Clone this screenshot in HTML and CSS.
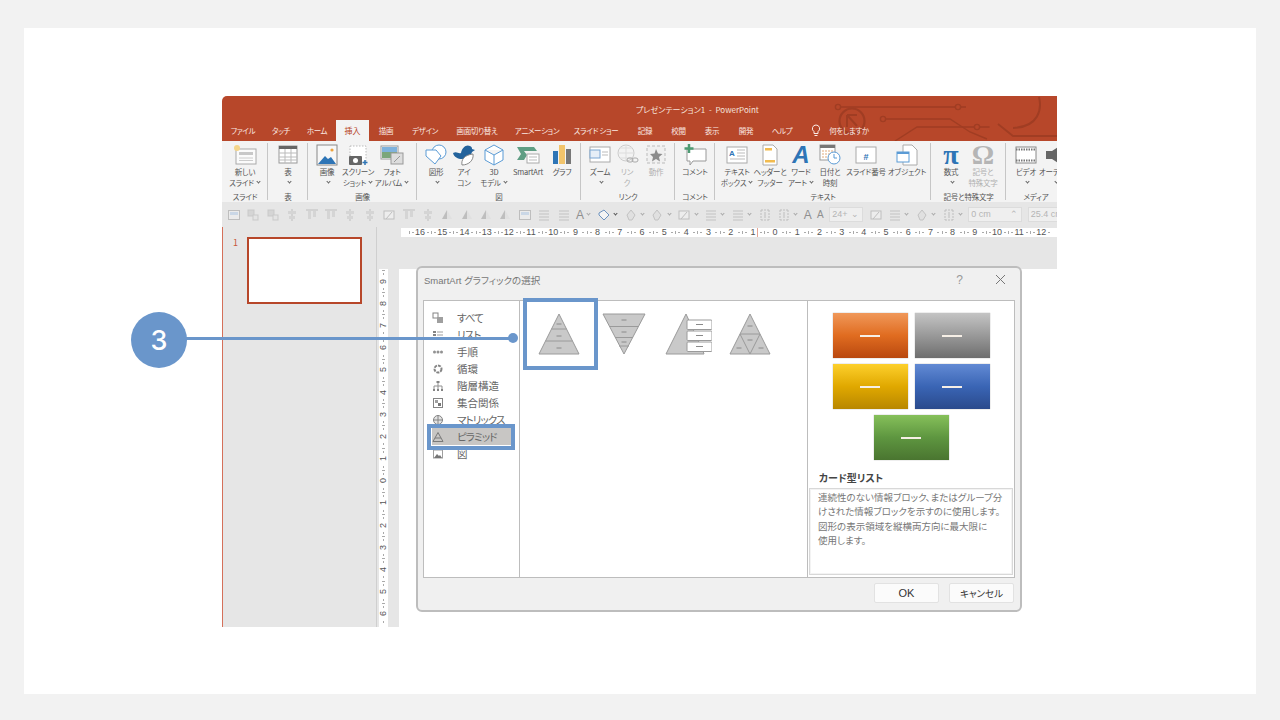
FILE: index.html
```html
<!DOCTYPE html>
<html lang="ja">
<head>
<meta charset="utf-8">
<title>SmartArt グラフィックの選択</title>
<link rel="stylesheet" href="styles.css">
</head>
<body>
<svg class="defs" width="0" height="0">
  <symbol id="t1" viewBox="0 0 14 14"><rect x="1.5" y="2.5" width="11" height="9" fill="#eee" stroke="#aaa"/><rect x="3" y="4" width="8" height="3" fill="#bcd0e6"/></symbol>
  <symbol id="t2" viewBox="0 0 14 14"><rect x="2" y="2" width="6" height="6" fill="#ccc" stroke="#bbb"/><rect x="7" y="7" width="5" height="5" fill="#e4e4e4" stroke="#bbb"/></symbol>
  <symbol id="t3" viewBox="0 0 14 14"><path d="M7 1v12" stroke="#aaa"/><rect x="3" y="3" width="8" height="3" fill="#ccc"/><rect x="4" y="8" width="6" height="3" fill="#ccc"/></symbol>
  <symbol id="t4" viewBox="0 0 14 14"><path d="M1 2h12" stroke="#aaa"/><rect x="3" y="3" width="3" height="8" fill="#ccc"/><rect x="8" y="3" width="3" height="6" fill="#ccc"/></symbol>
  <symbol id="t5" viewBox="0 0 14 14"><path d="M7 2 2 11h5z" fill="#aaa"/><path d="M7 2l5 9H7z" fill="#ddd"/></symbol>
  <symbol id="t6" viewBox="0 0 14 14"><path d="M2 3h10M2 6h10M2 9h10M2 12h10" stroke="#b0b0b0"/></symbol>
  <symbol id="t7" viewBox="0 0 14 14"><path d="M2 5l5-3 5 5-5 5-5-5z" fill="#f4f4f4" stroke="#6d93bf"/></symbol>
  <symbol id="t8" viewBox="0 0 14 14"><path d="M7 2l4 5-3 5H5L3 7z" fill="#ddd" stroke="#b0b0b0"/></symbol>
  <symbol id="t9" viewBox="0 0 14 14"><rect x="2" y="3" width="10" height="8" fill="#f2f2f2" stroke="#aaa"/><path d="M4 11l6-7" stroke="#aaa"/></symbol>
  <symbol id="t10" viewBox="0 0 14 14"><path d="M3 2v10M11 2v10M3 2h8M3 12h8" stroke="#aaa" stroke-dasharray="2 1" fill="none"/><path d="M7 4v6" stroke="#aaa"/></symbol>
</svg>

<main class="card">
  <section class="shot">
    <div class="head">
      <svg class="circuit" viewBox="0 0 230 45" width="230" height="45">
        <g fill="none" stroke="#a03d23" stroke-width="1.4">
          <circle cx="11" cy="11" r="2.600"/><path d="M13.600 11H128M134 11h5"/><circle cx="131" cy="11" r="2.600"/>
          <circle cx="25" cy="25" r="12.500" stroke-width="2.200"/><path d="M20 19v12M20 19h10M20 19l10 11" stroke-width="2"/>
          <circle cx="56" cy="23" r="2.600"/><path d="M58.600 23H123l20 13 17 7"/>
          <path d="M68 45l22-14h57.500M152.600 31h10"/><circle cx="150" cy="31" r="2.600"/>
          <path d="M171 28l15 12h44" stroke-width="1.800"/>
          <path d="M212 1c3 12 0 30-26 31" stroke-width="2"/>
        </g>
      </svg>
      <header class="titlebar">
        <span class="doc-title">プレゼンテーション1 - PowerPoint</span>
      </header>
      <nav class="tabs">
        <span class="tab w42">ファイル</span><span class="tab w34">タッチ</span><span class="tab w38">ホーム</span><span class="tab active w33">挿入</span><span class="tab w34">描画</span><span class="tab w44">デザイン</span><span class="tab w60">画面切り替え</span><span class="tab w60">アニメーション</span><span class="tab w58">スライド ショー</span><span class="tab w40">記録</span><span class="tab w27">校閲</span><span class="tab w40">表示</span><span class="tab w28">開発</span><span class="tab w44">ヘルプ</span>
        <span class="tab w24"><svg class="bulb" viewBox="0 0 10 13" width="10" height="13"><path d="M5 1a3.6 3.6 0 0 0-2 6.6V9.5h4V7.6A3.6 3.6 0 0 0 5 1zM3.5 11.5h3" fill="none" stroke="#fbeee9"/></svg></span>
        <span class="tab w42">何をしますか</span>
      </nav>
    </div>

    <div class="ribbon">
      <div class="group g46">
        <div class="items">
          <div class="rb w46">
            <svg class="ico" viewBox="0 0 24 22"><rect x="3" y="5" width="20" height="15" fill="#fbfbfb" stroke="#aaa"/><rect x="6" y="8" width="14" height="3" fill="#c8c8c8"/><path d="M6 14h14M6 16.5h14" stroke="#ccc"/><circle cx="4" cy="4" r="3" fill="#f4d58a"/></svg>
            <span class="lb">新しい</span><span class="lb">スライド<i class="chev"></i></span>
          </div>
        </div>
        <span class="glabel">スライド</span>
      </div>
      <div class="group g40">
        <div class="items">
          <div class="rb w40">
            <svg class="ico" viewBox="0 0 24 22"><rect x="3" y="2" width="18" height="17" fill="#fff" stroke="#999"/><rect x="3" y="2" width="18" height="3" fill="#666"/><path d="M3 9h18M3 13h18M3 16h18M9 5v14M15 5v14" stroke="#bbb"/></svg>
            <span class="lb">表</span><span class="lb"><i class="chev"></i></span>
          </div>
        </div>
        <span class="glabel">表</span>
      </div>
      <div class="group g109">
        <div class="items p2">
          <div class="rb w34">
            <svg class="ico" viewBox="0 0 24 22"><rect x="2" y="1" width="20" height="20" fill="#f7f7f7" stroke="#888"/><circle cx="17" cy="6" r="1.6" fill="#eda23c"/><path d="M3 20l7-8 3 3 3-2 5 7z" fill="#2e75b6"/></svg>
            <span class="lb">画像</span><span class="lb"><i class="chev"></i></span>
          </div>
          <div class="rb w28">
            <svg class="ico" viewBox="0 0 24 22"><rect x="4" y="2" width="16" height="16" fill="#fff" stroke="#bbb" stroke-dasharray="1.5 1.5"/><rect x="3" y="12" width="13" height="9" rx="1" fill="#666"/><circle cx="9.500" cy="16.500" r="2.500" fill="#fff"/><path d="M19 16v5M16.500 18.500h5" stroke="#2e75b6" stroke-width="1.5"/></svg>
            <span class="lb">スクリーン</span><span class="lb">ショット<i class="chev"></i></span>
          </div>
          <div class="rb w40">
            <svg class="ico wide" viewBox="0 0 24 22"><rect x="1" y="2" width="17" height="13" fill="#fff" stroke="#999"/><path d="M2 3h15v5H2z" fill="#7fb2dd"/><path d="M2 8h15v6H2z" fill="#7ba67a"/><rect x="11" y="9" width="12" height="11" fill="#ddd" stroke="#999"/><path d="M14 18l6-6" stroke="#999"/></svg>
            <span class="lb">フォト</span><span class="lb">アルバム<i class="chev"></i></span>
          </div>
        </div>
        <span class="glabel">画像</span>
      </div>
      <div class="group g164">
        <div class="items p5">
          <div class="rb w28">
            <svg class="ico" viewBox="0 0 24 22"><circle cx="15" cy="8" r="7" fill="#fff" stroke="#5b9bd5"/><path d="M2 6h10l5 6-6 8-9-8z" fill="#fff" stroke="#5b9bd5" stroke-linejoin="round"/></svg>
            <span class="lb">図形</span><span class="lb"><i class="chev"></i></span>
          </div>
          <div class="rb w28">
            <svg class="ico" viewBox="0 0 24 22"><path d="M1 9c4-2 5 1 8 0 1-5 5-9 9-7 2 1 2 2 2 3l3 1-3 2c-1 4-5 7-10 7-4 0-8-2-9-6z" fill="#24639c"/><path d="M10 21c-1-5 2-10 11-11 1 6-4 11-11 11z" fill="#fff" stroke="#888"/></svg>
            <span class="lb">アイ</span><span class="lb">コン</span>
          </div>
          <div class="rb w32">
            <svg class="ico" viewBox="0 0 24 22"><path d="M12 1l9 5v10l-9 5-9-5V6zM3 6l9 5 9-5M12 11v10" fill="#fff" stroke="#5b9bd5" stroke-linejoin="round"/></svg>
            <span class="lb">3D</span><span class="lb">モデル<i class="chev"></i></span>
          </div>
          <div class="rb w36">
            <svg class="ico" viewBox="0 0 24 22"><path d="M1 3h17l3 4H8l3 4-3 5H1l4-6z" fill="#5f9e84"/><rect x="11" y="10" width="12" height="9" fill="#fff" stroke="#aaa"/><path d="M13 13h8M13 16h8" stroke="#bbb"/></svg>
            <span class="lb">SmartArt</span>
          </div>
          <div class="rb w32">
            <svg class="ico" viewBox="0 0 24 22"><rect x="3" y="7" width="5" height="13" fill="#2e75b6"/><rect x="9" y="1" width="6" height="19" fill="#f2c46b"/><rect x="16" y="5" width="5" height="15" fill="#777"/></svg>
            <span class="lb">グラフ</span>
          </div>
        </div>
        <span class="glabel">図</span>
      </div>
      <div class="group g94">
        <div class="items p5">
          <div class="rb w28">
            <svg class="ico" viewBox="0 0 24 22"><rect x="2" y="3" width="20" height="15" fill="#fff" stroke="#aaa"/><rect x="2" y="6" width="10" height="8" fill="#e6eef7" stroke="#7aa5d2"/><path d="M14 8h6M14 11h6" stroke="#bbb"/></svg>
            <span class="lb">ズーム</span><span class="lb"><i class="chev"></i></span>
          </div>
          <div class="rb w26 off">
            <svg class="ico" viewBox="0 0 24 22"><circle cx="11" cy="9" r="8" fill="none" stroke="#ccc"/><path d="M3 9h16M11 1v16M5 4h12M5 14h12" stroke="#ddd"/><rect x="12" y="14" width="6" height="4" rx="2" fill="none" stroke="#aaa"/><rect x="17" y="14" width="6" height="4" rx="2" fill="none" stroke="#aaa"/></svg>
            <span class="lb">リン</span><span class="lb">ク</span>
          </div>
          <div class="rb w32 off">
            <svg class="ico" viewBox="0 0 24 22"><rect x="3" y="2" width="18" height="17" fill="#f0f0f0" stroke="#bbb" stroke-dasharray="3 2"/><path d="M12 5l2 4.500 4.500.5-3.500 3 1 4.500-4-2.500-4 2.500 1-4.500L6 10l4.500-.5z" fill="#8c8c8c"/></svg>
            <span class="lb">動作</span>
          </div>
        </div>
        <span class="glabel">リンク</span>
      </div>
      <div class="group g40">
        <div class="items">
          <div class="rb w40">
            <svg class="ico" viewBox="0 0 24 22"><path d="M4 5h19v12H10l-3 4v-4H4z" fill="#fff" stroke="#999"/><path d="M6 0v9M1.500 4.500h9" stroke="#4d9b73" stroke-width="2.500"/></svg>
            <span class="lb">コメント</span>
          </div>
        </div>
        <span class="glabel">コメント</span>
      </div>
      <div class="group g216">
        <div class="items p4">
          <div class="rb w36">
            <svg class="ico" viewBox="0 0 24 22"><rect x="2" y="3" width="20" height="16" fill="#fff" stroke="#aaa"/><text x="4" y="12" class="ico-a">A</text><path d="M12 6h8M12 9h8M12 12h8M5 15h15" stroke="#bbb"/></svg>
            <span class="lb">テキスト</span><span class="lb">ボックス<i class="chev"></i></span>
          </div>
          <div class="rb w30">
            <svg class="ico" viewBox="0 0 24 22"><path d="M5 1h10l4 4v16H5z" fill="#fff" stroke="#aaa"/><rect x="7" y="4" width="7" height="2.500" fill="#f2bb4f"/><rect x="7" y="16" width="10" height="2.500" fill="#f2bb4f"/></svg>
            <span class="lb">ヘッダーと</span><span class="lb">フッター</span>
          </div>
          <div class="rb w32">
            <span class="wordart">A</span>
            <span class="lb">ワード</span><span class="lb">アート<i class="chev"></i></span>
          </div>
          <div class="rb w26">
            <svg class="ico" viewBox="0 0 24 22"><rect x="2" y="1" width="15" height="15" fill="#fff" stroke="#999"/><rect x="2" y="1" width="15" height="3" fill="#777"/><path d="M4 7h11M4 10h11M4 13h8" stroke="#e0a97a" stroke-dasharray="2 1"/><circle cx="16" cy="14" r="6" fill="#fff" stroke="#5b9bd5"/><path d="M16 10v4h3" fill="none" stroke="#5b9bd5"/></svg>
            <span class="lb">日付と</span><span class="lb">時刻</span>
          </div>
          <div class="rb w46">
            <svg class="ico" viewBox="0 0 24 22"><rect x="2" y="3" width="20" height="16" fill="#fff" stroke="#aaa"/><text x="12" y="15.500" class="ico-n">#</text></svg>
            <span class="lb">スライド番号</span>
          </div>
          <div class="rb w36">
            <svg class="ico" viewBox="0 0 24 22"><path d="M8 1h9l5 5v15H8z" fill="#fff" stroke="#aaa"/><rect x="2" y="8" width="12" height="10" fill="#fff" stroke="#5b9bd5"/><rect x="2" y="8" width="12" height="2" fill="#5b9bd5"/></svg>
            <span class="lb">オブジェクト</span>
          </div>
        </div>
        <span class="glabel">テキスト</span>
      </div>
      <div class="group g75">
        <div class="items p4">
          <div class="rb w32">
            <span class="sym pi">π</span>
            <span class="lb">数式</span><span class="lb"><i class="chev"></i></span>
          </div>
          <div class="rb w32 off">
            <span class="sym om">Ω</span>
            <span class="lb">記号と</span><span class="lb">特殊文字</span>
          </div>
        </div>
        <span class="glabel">記号と特殊文字</span>
      </div>
      <div class="group g60">
        <div class="items p6">
          <div class="rb w28">
            <svg class="ico" viewBox="0 0 24 22"><rect x="2" y="3" width="20" height="16" fill="#fff" stroke="#888"/><path d="M2 5.500h20M2 16.500h20" stroke="#777" stroke-width="2" stroke-dasharray="1.500 1"/></svg>
            <span class="lb">ビデオ</span><span class="lb"><i class="chev"></i></span>
          </div>
          <div class="rb w30">
            <svg class="ico" viewBox="0 0 24 22"><path d="M3 7h6l9-6v20l-9-6H3z" fill="#666"/></svg>
            <span class="lb">オーディオ</span><span class="lb"><i class="chev"></i></span>
          </div>
        </div>
        <span class="glabel">メディア</span>
      </div>
    </div>

    <div class="toolbar">
      <svg class="ti"><use href="#t1"/></svg><svg class="ti"><use href="#t2"/></svg><svg class="ti"><use href="#t2"/></svg><svg class="ti"><use href="#t3"/></svg><svg class="ti"><use href="#t4"/></svg><svg class="ti"><use href="#t4"/></svg><svg class="ti"><use href="#t3"/></svg><svg class="ti"><use href="#t3"/></svg><svg class="ti"><use href="#t9"/></svg><svg class="ti"><use href="#t4"/></svg><svg class="ti"><use href="#t3"/></svg><svg class="ti"><use href="#t5"/></svg><svg class="ti"><use href="#t5"/></svg><svg class="ti"><use href="#t5"/></svg><svg class="ti"><use href="#t5"/></svg><svg class="ti"><use href="#t1"/></svg><svg class="ti"><use href="#t6"/></svg><svg class="ti"><use href="#t6"/></svg>
      <span class="tt">A</span><i class="chev"></i>
      <svg class="ti solid"><use href="#t7"/></svg><i class="chev dark"></i>
      <svg class="ti"><use href="#t8"/></svg><i class="chev"></i>
      <svg class="ti"><use href="#t8"/></svg><i class="chev"></i>
      <svg class="ti"><use href="#t9"/></svg><i class="chev"></i>
      <svg class="ti"><use href="#t6"/></svg><i class="chev"></i>
      <svg class="ti"><use href="#t6"/></svg><i class="chev"></i>
      <svg class="ti"><use href="#t10"/></svg>
      <svg class="ti"><use href="#t10"/></svg><i class="chev"></i>
      <span class="tt">A</span><span class="tt small">A</span>
      <span class="field f34">24+<b>⌄</b></span>
      <svg class="ti"><use href="#t9"/></svg>
      <svg class="ti"><use href="#t6"/></svg><i class="chev"></i>
      <svg class="ti"><use href="#t8"/></svg><i class="chev"></i>
      <svg class="ti"><use href="#t10"/></svg><i class="chev"></i>
      <span class="field f54">0 cm<b>⌃</b></span>
      <span class="field f54">25.4 cm</span>
    </div>

    <div class="main">
      <aside class="thumbs">
        <span class="num">1</span>
        <div class="thumb"></div>
      </aside>
      <div class="work">
        <div class="hrow">
          <div class="hruler">
            <span>16</span><span>15</span><span>14</span><span>13</span><span>12</span><span>11</span><span>10</span><span>9</span><span>8</span><span>7</span><span>6</span><span>5</span><span>4</span><span>3</span><span>2</span><span>1</span><span>0</span><span>1</span><span>2</span><span>3</span><span>4</span><span>5</span><span>6</span><span>7</span><span>8</span><span>9</span><span>10</span><span>11</span><span>12</span>
          </div>
        </div>
        <div class="vrow">
          <div class="vruler">
            <span><em>9</em></span><span><em>8</em></span><span><em>7</em></span><span><em>6</em></span><span><em>5</em></span><span><em>4</em></span><span><em>3</em></span><span><em>2</em></span><span><em>1</em></span><span><em>0</em></span><span><em>1</em></span><span><em>2</em></span><span><em>3</em></span><span><em>4</em></span><span><em>5</em></span><span><em>6</em></span>
          </div>
          <div class="gutter"></div>
          <div class="canvas"></div>
        </div>
      </div>
    </div>

    <div class="dialog">
      <div class="dlg-title">
        <span class="dlg-name">SmartArt グラフィックの選択</span>
        <span class="dlg-help">?</span>
        <svg class="dlg-x" viewBox="0 0 11 11" width="11" height="11"><path d="M1 1l9 9M10 1l-9 9" stroke="#777"/></svg>
      </div>
      <div class="panel">
        <ul class="cats">
          <li class="kn"><svg class="ci" viewBox="0 0 12 12"><rect x="1" y="1" width="5" height="5" fill="#fff" stroke="#666"/><rect x="5" y="5" width="6" height="6" fill="#888"/></svg>すべて</li>
          <li class="kn"><svg class="ci" viewBox="0 0 12 12"><path d="M1 2h3v2H1zM1 5h3v2H1zM1 8h3v2H1z" fill="#666"/><path d="M5 3h6M5 6h6M5 9h6" stroke="#888"/></svg>リスト</li>
          <li><svg class="ci" viewBox="0 0 12 12"><circle cx="2.500" cy="6" r="1.500" fill="#777"/><circle cx="6" cy="6" r="1.500" fill="#777"/><circle cx="9.500" cy="6" r="1.500" fill="#777"/></svg>手順</li>
          <li><svg class="ci" viewBox="0 0 12 12"><circle cx="6" cy="6" r="3.500" fill="none" stroke="#666" stroke-width="2" stroke-dasharray="3 1"/></svg>循環</li>
          <li><svg class="ci" viewBox="0 0 12 12"><path d="M6 3v3M2 9V6h8v3M6 6v3" fill="none" stroke="#777"/><rect x="4.500" y="1" width="3" height="2" fill="#666"/><rect x="1" y="9" width="2" height="2" fill="#666"/><rect x="5" y="9" width="2" height="2" fill="#666"/><rect x="9" y="9" width="2" height="2" fill="#666"/></svg>階層構造</li>
          <li><svg class="ci" viewBox="0 0 12 12"><rect x="1.500" y="1.500" width="9" height="9" fill="#fff" stroke="#666"/><rect x="3" y="3" width="3" height="3" fill="#888"/><rect x="6" y="6" width="3" height="3" fill="#555"/></svg>集合関係</li>
          <li class="kn"><svg class="ci" viewBox="0 0 12 12"><circle cx="6" cy="6" r="4.500" fill="#ddd" stroke="#666"/><path d="M1 6h10M6 1v10" stroke="#666"/></svg>マトリックス</li>
          <li class="sel kn"><svg class="ci" viewBox="0 0 12 12"><path d="M6 1.500 1 10.500h10z" fill="none" stroke="#666"/><path d="M3 7h6" stroke="#666"/></svg>ピラミッド</li>
          <li><svg class="ci" viewBox="0 0 12 12"><rect x="1.500" y="2" width="9" height="8" fill="#fff" stroke="#888"/><path d="M2 10l3-4 2 2 1-1 2 3z" fill="#555"/></svg>図</li>
        </ul>
        <div class="gallery">
          <svg class="py" viewBox="0 0 44 42" width="44" height="42"><path d="M22 1 2 41h40z" fill="#c9c9c9" stroke="#9a9a9a"/><path d="M14.500 16h15M8.500 28h27" stroke="#9a9a9a"/><path d="M19.500 11h5M19.500 23h5M19.500 35h5" stroke="#8a8a8a"/></svg>
          <svg class="py p2nd" viewBox="0 0 44 42" width="44" height="42"><path d="M1 1h42L22 41z" fill="#c9c9c9" stroke="#9a9a9a"/><path d="M8 13.500h28M13 24.500h18M17 33h10" stroke="#9a9a9a"/><path d="M19.500 7h5M19.500 19h5M19.500 29h5" stroke="#8a8a8a"/></svg>
          <svg class="py p3rd" viewBox="0 0 48 42" width="48" height="42"><path d="M22 1 2 41h38l-1-3z" fill="#c9c9c9" stroke="#9a9a9a"/><g fill="#fff" stroke="#9a9a9a"><rect x="23" y="7" width="25" height="9.500" rx="1"/><rect x="23" y="18" width="25" height="9.500" rx="1"/><rect x="23" y="29" width="25" height="9.500" rx="1"/></g><path d="M32 11.500h7M32 22.500h7M32 33.500h7" stroke="#8a8a8a"/></svg>
          <svg class="py p4th" viewBox="0 0 44 42" width="44" height="42"><path d="M22 1 2 41h40z" fill="#c9c9c9" stroke="#9a9a9a"/><path d="M12 21h20L22 41z" fill="#c9c9c9" stroke="#9a9a9a"/><path d="M19.500 13h5M19.500 27h5M8.500 35h5M30.500 35h5" stroke="#8a8a8a"/></svg>
        </div>
        <div class="detail">
          <div class="tiles">
            <div class="tile orange"></div><div class="tile gray"></div><div class="tile yellow"></div><div class="tile blue"></div><div class="tile green"></div>
          </div>
          <div class="layout-name">カード型リスト</div>
          <div class="desc">連続性のない情報ブロック、またはグループ分<br>けされた情報ブロックを示すのに使用します。<br>図形の表示領域を縦横両方向に最大限に<br>使用します。</div>
        </div>
      </div>
      <div class="dlg-foot">
        <button class="btn ok">OK</button>
        <button class="btn">キャンセル</button>
      </div>
    </div>
  </section>

  <div class="hl hl-gallery"></div>
  <div class="hl hl-cat"></div>
  <div class="leader"></div>
  <div class="leader-dot"></div>
  <div class="badge">3</div>
</main>
</body>
</html>
```

FILE: styles.css
```css
* { box-sizing: border-box; }
html, body { margin: 0; height: 720px; overflow: hidden; }
body {
  background: #f2f2f2;
  padding: 28px 24px 26px;
  font-family: "Noto Sans CJK JP", "Liberation Sans", sans-serif;
  font-feature-settings: "palt";
  color: #555;
}
.defs { position: absolute; }

.card {
  position: relative;
  height: 666px;
  background: #fff;
  padding: 68px 199px 67px 198px;
}
.shot {
  position: relative;
  height: 531px;
  width: 835px;
  overflow: hidden;
  display: flex;
  flex-direction: column;
  border-radius: 5px 0 0 0;
}

/* Title bar + tabs */
.head { position: relative; flex: none; background: #b7472a; }
.titlebar {
  position: relative;
  height: 24px;
  display: flex;
  align-items: center;
  padding: 2px 0 0 414px;
}
.doc-title { font-size: 8px; color: #f6e3dc; word-spacing: 2px; white-space: nowrap; }
.circuit { position: absolute; right: 0; top: 0; }
.tabs {
  position: relative;
  height: 21px;
  display: flex;
}
.tab {
  display: flex;
  align-items: center;
  justify-content: center;
  font-size: 7.5px;
  letter-spacing: -.35px;
  color: #fbe9e3;
  white-space: nowrap;
  padding-bottom: 1px;
}
.tab.active { background: #f3f3f3; color: #b7472a; font-size: 8px; letter-spacing: 0; }
.bulb { display: block; }

.w24 { width: 24px; flex: none; } .w26 { width: 26px; flex: none; } .w27 { width: 27px; flex: none; }
.w28 { width: 28px; flex: none; } .w30 { width: 30px; flex: none; } .w32 { width: 32px; flex: none; }
.w33 { width: 33px; flex: none; } .w34 { width: 34px; flex: none; } .w36 { width: 36px; flex: none; }
.w38 { width: 38px; flex: none; } .w40 { width: 40px; flex: none; } .w42 { width: 42px; flex: none; }
.w44 { width: 44px; flex: none; } .w46 { width: 46px; flex: none; } .w58 { width: 58px; flex: none; }
.w60 { width: 60px; flex: none; }

/* Ribbon */
.ribbon {
  height: 61px;
  flex: none;
  background: #f3f3f3;
  display: flex;
}
.group {
  flex: none;
  display: flex;
  flex-direction: column;
  height: 61px;
  position: relative;
}
.group::after {
  content: "";
  position: absolute;
  right: 0; top: 2px; bottom: 2px;
  width: 1px;
  background: #c6c6c6;
}
.g46 { width: 46px; } .g40 { width: 40px; } .g109 { width: 109px; } .g164 { width: 164px; }
.g94 { width: 94px; } .g216 { width: 216px; } .g75 { width: 75px; } .g60 { width: 60px; }
.items { flex: 1; display: flex; padding-top: 3px; }
.p2 { padding-left: 2px; } .p4 { padding-left: 4px; } .p5 { padding-left: 5px; } .p6 { padding-left: 6px; }
.glabel { height: 10px; line-height: 10px; font-size: 7.5px; letter-spacing: -.2px; text-align: center; color: #555; white-space: nowrap; }
.rb { display: flex; flex-direction: column; align-items: center; }
.rb.off { color: #b0b0b0; }
.ico { width: 24px; height: 22px; display: block; flex: none; }
.lb { font-size: 7.5px; letter-spacing: -.2px; line-height: 11px; height: 11px; white-space: nowrap; display: flex; justify-content: center; align-items: center; }
.chev {
  display: inline-block;
  width: 3px; height: 3px;
  margin: -2px 1px 0 3px;
  border-right: 1px solid #666;
  border-bottom: 1px solid #666;
  transform: rotate(45deg);
  flex: none;
}
.wordart { height: 22px; font: italic bold 24px/22px "Liberation Sans", sans-serif; color: #2e75b6; }
.sym { height: 22px; font-family: "Liberation Serif", serif; font-size: 28px; line-height: 22px; }
.pi { color: #2e75b6; font-weight: bold; }
.om { color: #b5b5b5; font-weight: bold; }
.ico-a { font: bold 8px "Liberation Sans", sans-serif; fill: #2e75b6; }
.ico-n { font: bold 9px "Liberation Sans", sans-serif; fill: #2e75b6; text-anchor: middle; }

/* Quick format toolbar */
.toolbar {
  height: 25px;
  flex: none;
  background: #e6e6e6;
  display: flex;
  align-items: center;
  padding-left: 5px;
  gap: 5.4px;
  white-space: nowrap;
  overflow: hidden;
}
.ti { width: 14px; height: 14px; flex: none; opacity: .65; }
.ti.solid { opacity: 1; }
.toolbar .chev { margin: -2px 1px 0 -2px; border-color: #aaa; }
.toolbar .chev.dark { border-color: #555; }
.tt { font: 12px "Liberation Sans", sans-serif; color: #8f8f8f; }
.tt.small { font-size: 10px; }
.field {
  flex: none;
  height: 15px;
  background: #efefef;
  border: 1px solid #dcdcdc;
  font: 9px/13px "Liberation Sans", sans-serif;
  color: #b5b5b5;
  padding-left: 2px;
  display: flex;
  justify-content: space-between;
}
.field b { font-weight: normal; padding-right: 3px; }
.f34 { width: 34px; } .f54 { width: 54px; }

/* Main */
.main { flex: 1; display: flex; min-height: 0; background: #e6e6e6; border-left: 1px solid #d5705a; }
.thumbs {
  width: 154px;
  flex: none;
  border-right: 1px solid #cfcfcf;
  display: flex;
  align-items: flex-start;
  padding: 10px 0 0 10px;
  gap: 10px;
}
.num { font-size: 9px; line-height: 11px; color: #c8563c; width: 4px; }
.thumb { width: 115px; height: 67px; background: #fff; border: 2px solid #b7472a; }
.work { flex: 1; min-width: 0; display: flex; flex-direction: column; }
.hrow { height: 42px; flex: none; padding: 1px 0 0 24px; }
.hruler {
  height: 9px;
  background: linear-gradient(#e5a493, #e5a493) 356px 0 / 1px 100% no-repeat, #fff;
  display: flex;
  padding-left: 8px;
  white-space: nowrap;
  overflow: hidden;
}
.hruler span {
  width: 22.2px;
  flex: none;
  text-align: center;
  font: 9px/9px "Liberation Sans", sans-serif;
  color: #555;
  background:
    linear-gradient(#aaa, #aaa) 0 3px / 1px 3px no-repeat,
    radial-gradient(circle at 4px 4.5px, #aaa .5px, transparent .8px) 0 0 / 8px 9px no-repeat,
    radial-gradient(circle at 3px 4.5px, #aaa .5px, transparent .8px) 16px 0 / 6px 9px no-repeat;
}
.vrow { flex: 1; display: flex; min-height: 0; padding-left: 2px; }
.vruler { width: 9px; flex: none; background: #fff; display: flex; flex-direction: column; padding-top: 1px; overflow: hidden; }
.vruler span {
  height: 22.2px;
  flex: none;
  display: flex;
  align-items: center;
  justify-content: center;
  font: 9px/9px "Liberation Sans", sans-serif;
  color: #555;
  background:
    linear-gradient(#aaa, #aaa) 3px 0 / 3px 1px no-repeat,
    radial-gradient(circle at 4.5px 4px, #aaa .5px, transparent .8px) 0 0 / 9px 8px no-repeat,
    radial-gradient(circle at 4.5px 3px, #aaa .5px, transparent .8px) 0 16px / 9px 6px no-repeat;
}
.vruler em { font-style: normal; transform: rotate(-90deg); }
.gutter { width: 11px; flex: none; }
.canvas { flex: 1; background: #fff; }

/* Dialog window */
.dialog {
  position: absolute;
  left: 194px; top: 170px;
  width: 606px; height: 346px;
  background: #f0f0f0;
  border: 2px solid #bdbdbd;
  border-radius: 6px;
  padding: 0 5px;
  display: flex;
  flex-direction: column;
}
.dlg-title { height: 32px; flex: none; display: flex; align-items: center; padding-bottom: 9px; }
.dlg-name { font-size: 9.5px; color: #777; font-family: "Liberation Sans", "Noto Sans CJK JP", sans-serif; flex: 1; padding-left: 1px; }
.dlg-help { font: 12px "Liberation Sans", sans-serif; color: #999; margin-right: 32px; }
.dlg-x { margin-right: 9px; }
.panel { height: 278px; flex: none; display: flex; background: #fff; border: 1px solid #bdbdbd; }
.cats {
  list-style: none;
  margin: 0;
  padding: 8px 0 0;
  width: 96px;
  flex: none;
  border-right: 1px solid #bdbdbd;
}
.cats li {
  height: 17px;
  margin-left: 8px;
  width: 79px;
  display: flex;
  align-items: center;
  font-size: 10.5px;
  color: #666;
  white-space: nowrap;
}
.cats li.kn { letter-spacing: -.9px; }
.cats li.sel { background: #c8c6c4; }
.ci { width: 12px; height: 12px; flex: none; margin-right: 13px; opacity: .8; }
.gallery { width: 288px; flex: none; border-right: 1px solid #bdbdbd; position: relative; display: flex; align-items: flex-start; padding: 12px 0 0 17px; }
.p2nd { margin-left: 21px; }
.p3rd { margin-left: 18px; }
.p4th { margin-left: 16px; }
.detail { flex: 1; min-width: 0; display: flex; flex-direction: column; padding: 12px 1px 0; }
.tiles { display: flex; flex-wrap: wrap; justify-content: center; gap: 6px 7px; width: 158px; margin: 0 auto; }
.tile {
  width: 75px; height: 45px;
  display: flex; align-items: center; justify-content: center;
  box-shadow: 0 0 1px #999;
}
.tile::after { content: ""; width: 20px; height: 2px; background: #f6efe6; }
.orange { background: linear-gradient(#f0985a, #e06c20 50%, #b9480f); }
.gray { background: linear-gradient(#c4c4c4, #6e6e6e); }
.yellow { background: linear-gradient(#fdd02c, #e0a800 50%, #b88700); }
.blue { background: linear-gradient(#628ad4, #3a65b5 50%, #2a4a8c); }
.green { background: linear-gradient(#86c05a, #5e9640 50%, #4a7530); }
.layout-name { font-size: 10px; font-weight: bold; line-height: 12px; margin: 12px 0 4px 10px; color: #444; }
.desc {
  height: 87px;
  background: #fff;
  border: 1px solid #d8d8d8;
  outline: 1px solid #f3f3f3;
  outline-offset: -2px;
  padding: 1px 0 0 8px;
  font-size: 9.5px;
  line-height: 14.4px;
  color: #777;
  white-space: nowrap;
}
.dlg-foot { flex: 1; display: flex; justify-content: flex-end; gap: 10px; padding: 5px 1px 0 0; align-items: flex-start; }
.btn {
  width: 65px; height: 20px;
  background: #fbfbfb;
  border: 1px solid #e2e2e2;
  border-radius: 2px;
  font-family: inherit;
  font-feature-settings: "palt";
  font-size: 9.5px;
  color: #333;
  padding: 0;
}
.btn.ok { font-family: "Liberation Sans", sans-serif; font-size: 11px; }

/* Annotation overlays */
.hl { position: absolute; border: 4px solid #6a96cb; }
.hl-gallery { left: 499px; top: 270px; width: 75px; height: 72px; }
.hl-cat { left: 403px; top: 396px; width: 88px; height: 26px; }
.leader { position: absolute; left: 150px; top: 309px; width: 338px; height: 3px; background: #6a96cb; }
.leader-dot { position: absolute; left: 484px; top: 305px; width: 10px; height: 10px; border-radius: 50%; background: #6a96cb; }
.badge {
  position: absolute;
  left: 107px; top: 284px;
  width: 56px; height: 56px;
  border-radius: 50%;
  background: #6a96cb;
  color: #fff;
  font: 500 27px/57px "Inter", sans-serif;
  text-align: center;
}
```
